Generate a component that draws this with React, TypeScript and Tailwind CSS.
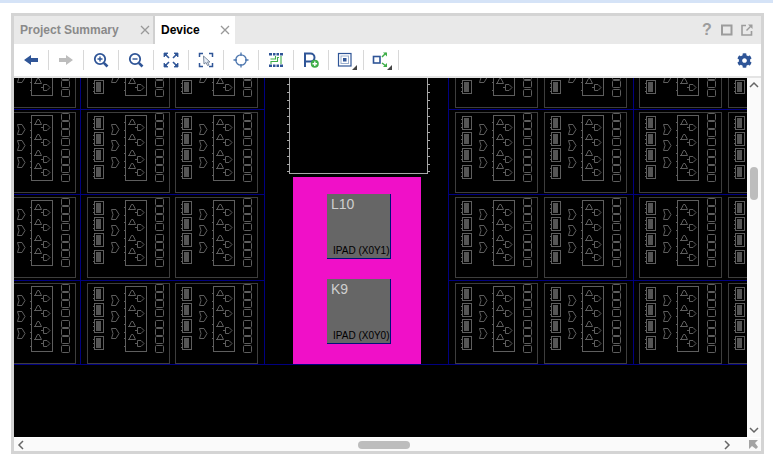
import { FaCog } from "react-icons/fa";

const NAVY = "#2f5597";
const GREEN = "#3fae49";
const LINE = "#5e5e5e";

const SEPARATED_ICONS = [
  // back
  <polygon key="back" points="1,8 8,3 8,6 15,6 15,10 8,10 8,13" fill={NAVY} />,
  // forward
  <polygon key="fwd" points="15,8 8,3 8,6 1,6 1,10 8,10 8,13" fill="#bdbdbd" />,
  // zoom in
  <g key="zin" fill="none" stroke={NAVY} strokeWidth="1.8">
    <circle cx="7" cy="7" r="5.2" />
    <path d="M10.8 10.8 L14.5 14.5" strokeWidth="2.6" />
    <path d="M4.5 7 H9.5 M7 4.5 V9.5" strokeWidth="1.4" />
  </g>,
  // zoom out
  <g key="zout" fill="none" stroke={NAVY} strokeWidth="1.8">
    <circle cx="7" cy="7" r="5.2" />
    <path d="M10.8 10.8 L14.5 14.5" strokeWidth="2.6" />
    <path d="M4.5 7 H9.5" strokeWidth="1.4" />
  </g>,
  // zoom fit
  <g key="fit" fill={NAVY} stroke={NAVY}>
    <path d="M1 1 L5 1 L1 5 Z M15 1 L11 1 L15 5 Z M1 15 L5 15 L1 11 Z M15 15 L11 15 L15 11 Z" strokeWidth="0.8" />
    <path d="M2 2 L6 6 M14 2 L10 6 M2 14 L6 10 M14 14 L10 10" strokeWidth="1.6" />
  </g>,
  // select area
  <g key="area" fill="none">
    <path d="M1.5 5 V1.5 H5 M11 1.5 H14.5 V5 M1.5 11 V14.5 H5 M11 14.5 H14.5 V11" stroke={NAVY} strokeWidth="1.5" />
    <path d="M5.5 4 L12 10 H9.5 L11 13 L9.5 13.5 L8 10.5 L6 12 Z" fill="#e8eef6" stroke="#6f7f95" strokeWidth="0.9" />
  </g>,
  // crosshair
  <g key="cross" fill="none" stroke="#4a74ad" strokeWidth="1.3">
    <circle cx="8" cy="8" r="5.2" />
    <path d="M8 0.5 V4 M8 12 V15.5 M0.5 8 H4 M12 8 H15.5" />
  </g>,
  // routing
  <g key="route">
    <path d="M1 1 h3 v2.5 h-3 Z M5 1 h2.5 v2.5 h-2.5 Z M8.5 1 h2.5 v2.5 h-2.5 Z M12 1 h3 v2.5 h-3 Z M1 12.5 h3 v2.5 h-3 Z M5 12.5 h2.5 v2.5 h-2.5 Z M8.5 12.5 h2.5 v2.5 h-2.5 Z M12 12.5 h3 v2.5 h-3 Z" fill={NAVY} />
    <path d="M2.5 7 H7.5 V4 M3 12 V9.5 H9.5 V5.5 H11 M13 4 V12" fill="none" stroke={GREEN} strokeWidth="1.1" />
  </g>,
  // add pblock
  <g key="pblock">
    <path d="M2 15 V1.5 H7.5 A4 4 0 0 1 7.5 9.5 H2" fill="none" stroke={NAVY} strokeWidth="2" />
    <circle cx="11.8" cy="11.8" r="4" fill={GREEN} />
    <path d="M9.5 11.8 H14.1 M11.8 9.5 V14.1" stroke="#fff" strokeWidth="1.4" />
  </g>,
  // nested squares
  <g key="nested" transform="translate(-1 0)">
    <rect x="1.5" y="1.5" width="12.5" height="12.5" fill="none" stroke={NAVY} strokeWidth="1.2" />
    <rect x="4" y="4" width="7.5" height="7.5" fill="none" stroke="#9db1cf" strokeWidth="1" />
    <rect x="6" y="6" width="3.5" height="3.5" fill={NAVY} />
    <polygon points="20,13 20,18 15,18" fill="#444" />
  </g>,
  // expand connections
  <g key="expand" transform="translate(-1 0)">
    <rect x="1.5" y="4.5" width="6.5" height="6.5" fill="#fff" stroke={NAVY} strokeWidth="1.6" />
    <path d="M10 5 L14 1 M10 11 L14 14" stroke={GREEN} strokeWidth="1.5" />
    <polygon points="11,0.5 15,0.5 15,4.5" fill={GREEN} />
    <polygon points="11,15 15,15 15,11" fill={GREEN} />
    <polygon points="20,13 20,18 15,18" fill="#444" />
  </g>,
];

const ROWS = [27, 112, 197, 283];
const COLUMNS = [-7, 87, 175, 455, 544, 639, 728];
const V_LINES = [80, 264, 448, 633];
const H_LINES = [109, 194, 280];

function Tile({ x, y }: { x: number; y: number }) {
  return (
    <g transform={`translate(${x} ${y})`} fill="none" stroke={LINE} strokeWidth="1">
      <rect x="0.5" y="0.5" width="82" height="80" stroke="#3d3d3d" shapeRendering="crispEdges" />
      {[4, 20, 36, 53].map((cy) => (
        <g key={cy}>
          <rect x="7.5" y={cy + 0.5} width="9" height="13" shapeRendering="crispEdges" />
          <rect x="9" y={cy + 2} width="5" height="10" fill="#555" stroke="none" />
          <path d={`M6 ${cy + 3.5} h1.5 M6 ${cy + 7.5} h1.5 M6 ${cy + 11.5} h1.5`} />
        </g>
      ))}
      {[12, 28, 45].map((gy) => (
        <path key={gy} d={`M24.5 ${gy + 0.5} H29 L32 ${gy + 5.5} L29 ${gy + 10.5} H24.5 L26 ${gy + 5.5} Z`} />
      ))}
      <rect x="38.5" y="3.5" width="21" height="65" shapeRendering="crispEdges" />
      {[10, 18, 25, 33, 41, 49, 55, 63].map((ty) => (
        <path key={ty} d={`M37 ${ty + 0.5} h1.5`} />
      ))}
      {[10, 25, 41, 54].map((by) => (
        <path key={by} d={`M42 ${by + 2.5} L44.5 ${by - 2.5} H46 L48.5 ${by + 2.5} H41`} />
      ))}
      {[15, 30, 47, 60].map((fy) => (
        <path key={fy} d={`M48 ${fy + 0.5} H50.5 M50.5 ${fy - 2.5} H54 L57 ${fy + 0.5} L54 ${fy + 3.5} H50.5 Z`} />
      ))}
      {[1, 9, 17, 26, 37, 45, 53, 62].map((sy) => (
        <rect key={sy} x="68.5" y={sy + 0.5} width="8" height="7" rx="1" />
      ))}
    </g>
  );
}

function Pad({ name, site }: { name: string; site: string }) {
  return (
    <div className="relative h-[65px] w-[64px] border-r border-b border-[#00107a] bg-[#666666]">
      <span className="absolute left-[4px] top-[1px] text-[14px] leading-[18px] text-[#cfcfcf]">{name}</span>
      <span className="absolute left-[6px] top-[51px] whitespace-nowrap text-[10px] leading-[11px] text-black">{site}</span>
    </div>
  );
}

function Chevron({ d }: { d: string }) {
  return (
    <svg width="10" height="10" viewBox="0 0 10 10">
      <path d={d} fill="none" stroke="#666" strokeWidth="1.5" />
    </svg>
  );
}

export default function App() {
  return (
    <div className="h-[460px] w-[773px] overflow-hidden bg-white font-['Liberation_Sans',Arial,sans-serif]">
      <div className="h-[3px] bg-[#d5e3f7]" />
      <div className="ml-[11px] mt-[10px] flex h-[441px] w-[753px] flex-col border-[3px] border-[#d4d4d4]">
        {/* tab bar */}
        <div className="flex h-[28px] shrink-0 items-center bg-[#e9e9e9]">
          <div className="flex h-full w-[141px] items-center justify-between border-r-2 border-[#d0d0d0] pl-[6px] pr-[3px]">
            <span className="text-[12px] font-bold text-[#8a8a8a]">Project Summary</span>
            <svg width="10" height="10" viewBox="0 0 10 10">
              <path d="M1 1 L9 9 M9 1 L1 9" stroke="#999" strokeWidth="1.3" />
            </svg>
          </div>
          <div className="flex h-full w-[80px] items-center justify-between bg-white pl-[6px] pr-[5px]">
            <span className="text-[12px] font-bold text-black">Device</span>
            <svg width="10" height="10" viewBox="0 0 10 10">
              <path d="M1 1 L9 9 M9 1 L1 9" stroke="#999" strokeWidth="1.3" />
            </svg>
          </div>
          <div className="ml-auto flex items-center gap-[8px] pr-[8px]">
            <span className="w-[12px] text-center text-[16px] font-bold leading-none text-[#9c9c9c]">?</span>
            <svg width="12" height="12" viewBox="0 0 12 12">
              <rect x="1" y="1.5" width="9.5" height="9" fill="none" stroke="#9c9c9c" strokeWidth="2" />
            </svg>
            <svg width="12" height="12" viewBox="0 0 12 12">
              <path d="M5 1.5 H1 V11 H10.5 V7" fill="none" stroke="#9c9c9c" strokeWidth="1.6" />
              <path d="M5.5 6.5 L10 2" stroke="#9c9c9c" strokeWidth="1.5" />
              <polygon points="7,0.5 11.5,0.5 11.5,5" fill="#9c9c9c" />
            </svg>
          </div>
        </div>

        {/* toolbar */}
        <div className="flex h-[32px] shrink-0 items-center bg-white">
          {SEPARATED_ICONS.map((icon, index) => (
            <div key={index} className="flex h-[20px] w-[35px] items-center justify-center border-r border-[#d8d8d8]">
              <svg width="16" height="16" viewBox="0 0 16 16" overflow="visible">
                {icon}
              </svg>
            </div>
          ))}
          <FaCog className="ml-auto mr-[9px] text-[15px] text-[#2f5597]" />
        </div>
        <div className="h-[2px] shrink-0 bg-[#e4e4e4]" />

        {/* device view */}
        <div className="flex min-h-0 flex-1">
          <div className="relative h-[359px] w-[733px] overflow-hidden bg-black">
            <svg className="absolute inset-0" width="733" height="359" viewBox="14 78 733 359">
              {ROWS.map((y) => COLUMNS.map((x) => <Tile key={`${x}-${y}`} x={x} y={y} />))}
              {/* clock region lines */}
              <rect x="264" y="78" width="185" height="300" fill="#000" />
              <g stroke="#000080" strokeWidth="1" shapeRendering="crispEdges">
                {V_LINES.map((x) => (
                  <path key={x} d={`M${x + 0.5} 78 V364`} />
                ))}
                {H_LINES.map((y) => (
                  <g key={y}>
                    <path d={`M14 ${y + 0.5} H264`} />
                    <path d={`M449 ${y + 0.5} H747`} />
                  </g>
                ))}
                <path d="M14 364.5 H747" />
              </g>
              {/* dashed outline of the block above the pads */}
              <g fill="none" stroke="#a8a8a8" strokeWidth="1" shapeRendering="crispEdges">
                <path d="M289.5 78 V173.5 H427.5 V78" />
                {[84, 92, 100, 108, 116, 124, 132, 140, 148, 156, 164, 171].map((y) => (
                  <path key={y} d={`M287 ${y + 0.5} H289 M428 ${y + 0.5} H430`} />
                ))}
              </g>
            </svg>
            {/* IO site with its two pads */}
            <div className="absolute left-[279px] top-[99px] flex h-[187px] w-[128px] flex-col items-start gap-[20px] bg-[#f010c8] pl-[34px] pt-[17px]">
              <Pad name="L10" site="IPAD (X0Y1)" />
              <Pad name="K9" site="IPAD (X0Y0)" />
            </div>
          </div>

          {/* vertical scrollbar */}
          <div className="flex h-[359px] w-[14px] flex-col items-center bg-[#fafafa] pt-[2px]">
            <Chevron d="M1 7 L5 3 L9 7" />
            <div className="mt-[77px] h-[33px] w-[8px] rounded-[4px] bg-[#bdbdbd]" />
            <div className="mt-auto pb-[2px]">
              <Chevron d="M1 3 L5 7 L9 3" />
            </div>
          </div>
        </div>

        {/* horizontal scrollbar */}
        <div className="flex h-[13px] shrink-0 items-center bg-[#fafafa]">
          <div className="ml-[2px]">
            <Chevron d="M7 1 L3 5 L7 9" />
          </div>
          <div className="ml-[332px] h-[8px] w-[52px] rounded-[4px] bg-[#bdbdbd]" />
          <div className="ml-auto mr-[16px]">
            <Chevron d="M3 1 L7 5 L3 9" />
          </div>
          <svg className="mr-[2px] shrink-0" width="11" height="11" viewBox="0 0 11 11">
            <polygon points="1,1 10,1 7,4 10,8 8,10 4,7 1,10" fill="#a3a3a3" />
          </svg>
        </div>
      </div>
    </div>
  );
}
